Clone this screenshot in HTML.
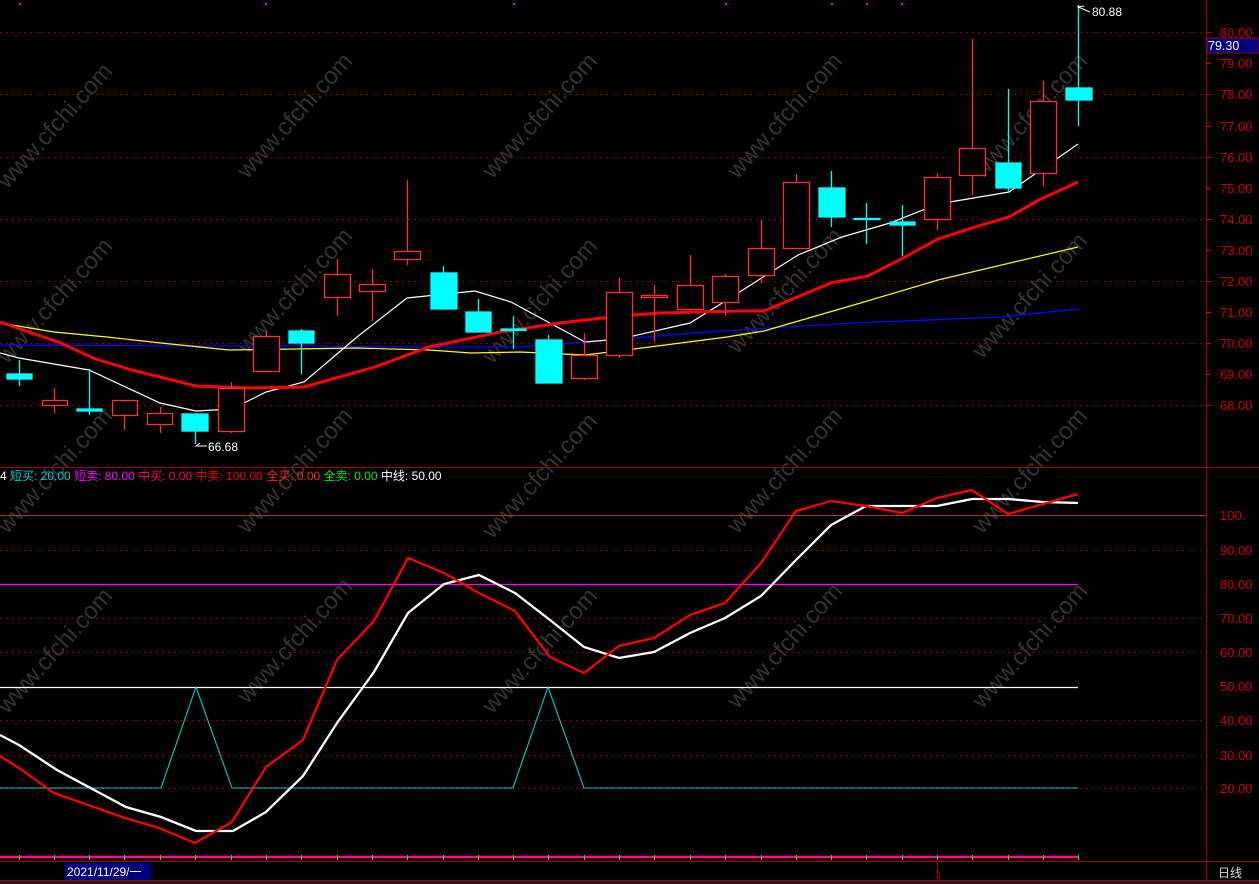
<!DOCTYPE html>
<html><head><meta charset="utf-8"><style>
html,body{margin:0;padding:0;background:#000;width:1259px;height:884px;overflow:hidden}
svg{display:block}
text{font-family:"Liberation Sans","Noto Sans CJK SC",sans-serif}
</style></head><body>
<svg width="1259" height="884" viewBox="0 0 1259 884" xmlns="http://www.w3.org/2000/svg">
<rect width="1259" height="884" fill="#000"/>
<!-- watermarks -->
<g fill="#333" font-size="24" font-family="Liberation Sans,sans-serif">
<g transform="translate(55,125) rotate(-48)"><text x="-80" y="8">www.cfchi.com</text></g>
<g transform="translate(295,115) rotate(-48)"><text x="-80" y="8">www.cfchi.com</text></g>
<g transform="translate(540,115) rotate(-48)"><text x="-80" y="8">www.cfchi.com</text></g>
<g transform="translate(785,115) rotate(-48)"><text x="-80" y="8">www.cfchi.com</text></g>
<g transform="translate(1030,115) rotate(-48)"><text x="-80" y="8">www.cfchi.com</text></g>
<g transform="translate(55,300) rotate(-48)"><text x="-80" y="8">www.cfchi.com</text></g>
<g transform="translate(295,290) rotate(-48)"><text x="-80" y="8">www.cfchi.com</text></g>
<g transform="translate(540,300) rotate(-48)"><text x="-80" y="8">www.cfchi.com</text></g>
<g transform="translate(785,290) rotate(-48)"><text x="-80" y="8">www.cfchi.com</text></g>
<g transform="translate(1030,295) rotate(-48)"><text x="-80" y="8">www.cfchi.com</text></g>
<g transform="translate(55,470) rotate(-48)"><text x="-80" y="8">www.cfchi.com</text></g>
<g transform="translate(295,470) rotate(-48)"><text x="-80" y="8">www.cfchi.com</text></g>
<g transform="translate(540,475) rotate(-48)"><text x="-80" y="8">www.cfchi.com</text></g>
<g transform="translate(785,470) rotate(-48)"><text x="-80" y="8">www.cfchi.com</text></g>
<g transform="translate(1030,470) rotate(-48)"><text x="-80" y="8">www.cfchi.com</text></g>
<g transform="translate(55,650) rotate(-48)"><text x="-80" y="8">www.cfchi.com</text></g>
<g transform="translate(295,640) rotate(-48)"><text x="-80" y="8">www.cfchi.com</text></g>
<g transform="translate(540,650) rotate(-48)"><text x="-80" y="8">www.cfchi.com</text></g>
<g transform="translate(785,645) rotate(-48)"><text x="-80" y="8">www.cfchi.com</text></g>
<g transform="translate(1030,645) rotate(-48)"><text x="-80" y="8">www.cfchi.com</text></g>
</g>
<!-- grid upper -->
<g stroke="#8a0000" stroke-dasharray="2,4" stroke-width="1">
<line x1="0" y1="32.5" x2="1206" y2="32.5"/><line x1="0" y1="94.5" x2="1206" y2="94.5"/>
<line x1="0" y1="157.5" x2="1206" y2="157.5"/><line x1="0" y1="219.5" x2="1206" y2="219.5"/>
<line x1="0" y1="281.5" x2="1206" y2="281.5"/><line x1="0" y1="343.5" x2="1206" y2="343.5"/>
<line x1="0" y1="405.5" x2="1206" y2="405.5"/>
<line x1="0" y1="550.5" x2="1206" y2="550.5"/><line x1="0" y1="618.5" x2="1206" y2="618.5"/>
<line x1="0" y1="652.5" x2="1206" y2="652.5"/><line x1="0" y1="720.5" x2="1206" y2="720.5"/>
<line x1="0" y1="755.5" x2="1206" y2="755.5"/><line x1="0" y1="788.5" x2="1206" y2="788.5"/>
</g>
<!-- frame -->
<g stroke="#a00000" stroke-width="1" fill="none">
<line x1="1206.5" y1="0" x2="1206.5" y2="884"/>
<line x1="0" y1="467.5" x2="1259" y2="467.5"/>
<line x1="0" y1="861.5" x2="1259" y2="861.5"/>
<line x1="0" y1="880.5" x2="1259" y2="880.5"/>
</g>
<!-- top magenta dots -->
<g fill="#e000e0"><rect x="19" y="3" width="2" height="2"/><rect x="265" y="3" width="2" height="2"/><rect x="513" y="3" width="2" height="2"/><rect x="725" y="3" width="2" height="2"/><rect x="831" y="3" width="2" height="2"/><rect x="866" y="3" width="2" height="2"/><rect x="901" y="3" width="2" height="2"/></g>
<!-- MAs -->
<polyline fill="none" stroke="#0000ff" stroke-width="1.3" points="0,345 200,346 300,346 420,347 520,347 613,340 705,332 853,323 1001,317 1078,309"/>
<polyline fill="none" stroke="#ffff00" stroke-width="1.2" points="0,323 54,332 107,337 161,343 229,350 357,348 429,350 471,353 520,352 585,355 642,348 727,337 764,331 864,302 938,280 1078,247"/>
<polyline fill="none" stroke="#ffffff" stroke-width="1.2" points="0,353 19,358 89,370 160,403 196,411 232,409 266,392 304,382 357,337 407,298 475,291 511,302 548,322 585,342 620,339 690,323 727,300 798,255 842,237 890,223 938,204 1009,192 1078,144"/>
<polyline fill="none" stroke="#ff0000" stroke-width="3" points="0,322 61,343 93,358 132,370 196,386 250,388 304,387 375,367 429,347 500,332 560,323 620,316 660,313 740,311 764,311 831,283 868,276 905,257 938,239 975,227 1009,217 1039,200 1078,182"/>
<!-- candles -->
<g stroke-width="1.3">
<g stroke="#00ffff" fill="#00ffff">
<line x1="19.5" y1="360" x2="19.5" y2="386"/><rect x="7" y="374" width="25" height="5"/>
<line x1="89.5" y1="369" x2="89.5" y2="415"/><rect x="77" y="409" width="25" height="2"/>
<line x1="195.5" y1="414" x2="195.5" y2="444"/><rect x="182" y="414" width="26" height="17"/>
<line x1="301.5" y1="329" x2="301.5" y2="374"/><rect x="289" y="331" width="25" height="12"/>
<line x1="443.5" y1="266" x2="443.5" y2="309"/><rect x="431" y="273" width="26" height="36"/>
<line x1="478.5" y1="299" x2="478.5" y2="332"/><rect x="466" y="312" width="25" height="20"/>
<line x1="513.5" y1="316" x2="513.5" y2="349"/><rect x="501" y="329" width="25" height="1.5"/>
<line x1="548.5" y1="335" x2="548.5" y2="383"/><rect x="536" y="340" width="26" height="43"/>
<line x1="831.5" y1="171" x2="831.5" y2="227"/><rect x="819" y="188" width="26" height="29"/>
<line x1="866.5" y1="203" x2="866.5" y2="244"/><rect x="854" y="218.5" width="26" height="1"/>
<line x1="902.5" y1="205" x2="902.5" y2="256"/><rect x="890" y="222" width="25" height="3"/>
<line x1="1008.5" y1="89" x2="1008.5" y2="193"/><rect x="996" y="163" width="25" height="25"/>
<line x1="1078.5" y1="5" x2="1078.5" y2="126"/><rect x="1066" y="88" width="26" height="12"/>
</g>
<g stroke="#ff3030" fill="#000">
<line x1="54.5" y1="388" x2="54.5" y2="413"/><rect x="42.5" y="400.5" width="25" height="5"/>
<line x1="124.5" y1="400" x2="124.5" y2="430"/><rect x="112.5" y="400.5" width="25" height="15"/>
<line x1="160.5" y1="407" x2="160.5" y2="433"/><rect x="147.5" y="413.5" width="25" height="11"/>
<line x1="231.5" y1="382" x2="231.5" y2="433"/><rect x="218.5" y="388.5" width="26" height="43"/>
<line x1="266.5" y1="332" x2="266.5" y2="372"/><rect x="253.5" y="336.5" width="26" height="35"/>
<line x1="337.5" y1="259" x2="337.5" y2="316"/><rect x="324.5" y="274.5" width="26" height="23"/>
<line x1="372.5" y1="269" x2="372.5" y2="321"/><rect x="359.5" y="284.5" width="26" height="7"/>
<line x1="407.5" y1="180" x2="407.5" y2="265"/><rect x="394.5" y="251.5" width="26" height="8"/>
<line x1="584.5" y1="333" x2="584.5" y2="380"/><rect x="571.5" y="355.5" width="26" height="23"/>
<line x1="619.5" y1="278" x2="619.5" y2="358"/><rect x="606.5" y="292.5" width="26" height="63"/>
<line x1="654.5" y1="285" x2="654.5" y2="342"/><rect x="641.5" y="295.5" width="26" height="2"/>
<line x1="690.5" y1="255" x2="690.5" y2="311"/><rect x="677.5" y="285.5" width="26" height="24"/>
<line x1="725.5" y1="274" x2="725.5" y2="316"/><rect x="712.5" y="276.5" width="26" height="26"/>
<line x1="761.5" y1="220" x2="761.5" y2="283"/><rect x="748.5" y="248.5" width="26" height="27"/>
<line x1="796.5" y1="174" x2="796.5" y2="248"/><rect x="783.5" y="182.5" width="26" height="66"/>
<line x1="937.5" y1="173" x2="937.5" y2="230"/><rect x="924.5" y="177.5" width="26" height="42"/>
<line x1="972.5" y1="39" x2="972.5" y2="195"/><rect x="959.5" y="148.5" width="26" height="27"/>
<line x1="1043.5" y1="81" x2="1043.5" y2="186"/><rect x="1030.5" y="101.5" width="26" height="72"/>
</g>
</g>
<polyline points="1090,12 1078,7 1084,6" fill="none" stroke="#fff" stroke-width="1"/>
<text x="1092" y="16" fill="#fff" font-size="12">80.88</text>
<polyline points="207,446 196,446 200,443" fill="none" stroke="#fff" stroke-width="1"/>
<text x="208" y="451" fill="#fff" font-size="12">66.68</text>
<g fill="#cc0000" font-size="13">
<text x="1220" y="37">80.00</text><text x="1220" y="68">79.00</text><text x="1220" y="99">78.00</text>
<text x="1220" y="131">77.00</text><text x="1220" y="162">76.00</text><text x="1220" y="193">75.00</text>
<text x="1220" y="224">74.00</text><text x="1220" y="255">73.00</text><text x="1220" y="286">72.00</text>
<text x="1220" y="317">71.00</text><text x="1220" y="348">70.00</text><text x="1220" y="379">69.00</text>
<text x="1220" y="410">68.00</text>
</g>
<g stroke="#cc0000"><line x1="1206" y1="32.5" x2="1211" y2="32.5"/><line x1="1206" y1="63.5" x2="1211" y2="63.5"/><line x1="1206" y1="94.5" x2="1211" y2="94.5"/><line x1="1206" y1="126.5" x2="1211" y2="126.5"/><line x1="1206" y1="157.5" x2="1211" y2="157.5"/><line x1="1206" y1="188.5" x2="1211" y2="188.5"/><line x1="1206" y1="219.5" x2="1211" y2="219.5"/><line x1="1206" y1="250.5" x2="1211" y2="250.5"/><line x1="1206" y1="281.5" x2="1211" y2="281.5"/><line x1="1206" y1="312.5" x2="1211" y2="312.5"/><line x1="1206" y1="343.5" x2="1211" y2="343.5"/><line x1="1206" y1="374.5" x2="1211" y2="374.5"/><line x1="1206" y1="405.5" x2="1211" y2="405.5"/></g>
<rect x="1207" y="38" width="52" height="15" fill="#000080" stroke="#a00000"/>
<text x="1208" y="50" fill="#fff" font-size="12.5">79.30</text>
<text x="0" y="480" font-size="12"><tspan fill="#fff">4 </tspan><tspan fill="#00cccc">短买: 20.00 </tspan><tspan fill="#ff00ff">短卖: 80.00 </tspan><tspan fill="#ff0060">中买: 0.00 </tspan><tspan fill="#ee0000">中卖: 100.00 </tspan><tspan fill="#ff2020">全买: 0.00 </tspan><tspan fill="#00ee00">全卖: 0.00 </tspan><tspan fill="#fff">中线: 50.00</tspan></text>
<line x1="0" y1="515.5" x2="1206" y2="515.5" stroke="#c03030" stroke-width="1"/>
<line x1="0" y1="584.5" x2="1078" y2="584.5" stroke="#ff00ff" stroke-width="1.3"/>
<line x1="0" y1="687.5" x2="1078" y2="687.5" stroke="#ffffff" stroke-width="1.3"/>
<polyline fill="none" stroke="#00cccc" stroke-width="1.1" points="0,788 161,788 196,687 232,788 513,788 548,687 584,788 1078,788"/>
<polyline fill="none" stroke="#ffffff" stroke-width="2.3" points="0,735 19,745 57,770 126,807 161,817 196,831 233,831 266,812 303,776 337,723 374,672 408,613 444,584 479,575 515,593 550,620 584,647 619,658 654,652 690,633 725,618 761,596 796,560 831,525 866,506 902,506 937,506 972,499 1008,499 1043,502 1078,503"/>
<polyline fill="none" stroke="#ff0000" stroke-width="2.3" points="0,756 19,768 54,793 125,818 159,828 195,843 232,822 266,767 303,740 337,660 374,621 408,558 444,573 479,593 515,611 550,657 584,673 619,646 654,638 690,615 725,603 761,563 796,511 831,501 866,506 902,513 937,498 972,490 1008,514 1043,504 1078,494"/>
<g fill="#cc0000" font-size="13">
<text x="1220" y="520">100.</text><text x="1220" y="555">90.00</text><text x="1220" y="589">80.00</text>
<text x="1220" y="623">70.00</text><text x="1220" y="657">60.00</text><text x="1220" y="691">50.00</text>
<text x="1220" y="725">40.00</text><text x="1220" y="760">30.00</text><text x="1220" y="793">20.00</text>
</g>
<line x1="0" y1="857" x2="1078" y2="857" stroke="#ff1080" stroke-width="2.5"/>
<g fill="#00ff00">
<rect x="19" y="855" width="1" height="5"/><rect x="54" y="855" width="1" height="5"/><rect x="89" y="855" width="1" height="5"/><rect x="124" y="855" width="1" height="5"/><rect x="160" y="855" width="1" height="5"/><rect x="195" y="855" width="1" height="5"/><rect x="231" y="855" width="1" height="5"/><rect x="266" y="855" width="1" height="5"/><rect x="301" y="855" width="1" height="5"/><rect x="337" y="855" width="1" height="5"/><rect x="372" y="855" width="1" height="5"/><rect x="407" y="855" width="1" height="5"/><rect x="443" y="855" width="1" height="5"/><rect x="478" y="855" width="1" height="5"/><rect x="513" y="855" width="1" height="5"/><rect x="548" y="855" width="1" height="5"/><rect x="584" y="855" width="1" height="5"/><rect x="619" y="855" width="1" height="5"/><rect x="654" y="855" width="1" height="5"/><rect x="690" y="855" width="1" height="5"/><rect x="725" y="855" width="1" height="5"/><rect x="761" y="855" width="1" height="5"/><rect x="796" y="855" width="1" height="5"/><rect x="831" y="855" width="1" height="5"/><rect x="866" y="855" width="1" height="5"/><rect x="902" y="855" width="1" height="5"/><rect x="937" y="855" width="1" height="5"/><rect x="972" y="855" width="1" height="5"/><rect x="1008" y="855" width="1" height="5"/><rect x="1043" y="855" width="1" height="5"/><rect x="1078" y="855" width="1" height="5"/>
</g>
<rect x="65" y="863" width="86" height="17" fill="#000080"/>
<text x="67" y="876" fill="#fff" font-size="12">2021/11/29/一</text>
<line x1="937.5" y1="862" x2="937.5" y2="880" stroke="#a00000"/>
<text x="936" y="878" fill="#a00000" font-size="11">1</text>
<rect x="0" y="881" width="1259" height="3" fill="#222"/>
<text x="1218" y="877" fill="#ddd" font-size="12">日线</text>
</svg>
</body></html>
